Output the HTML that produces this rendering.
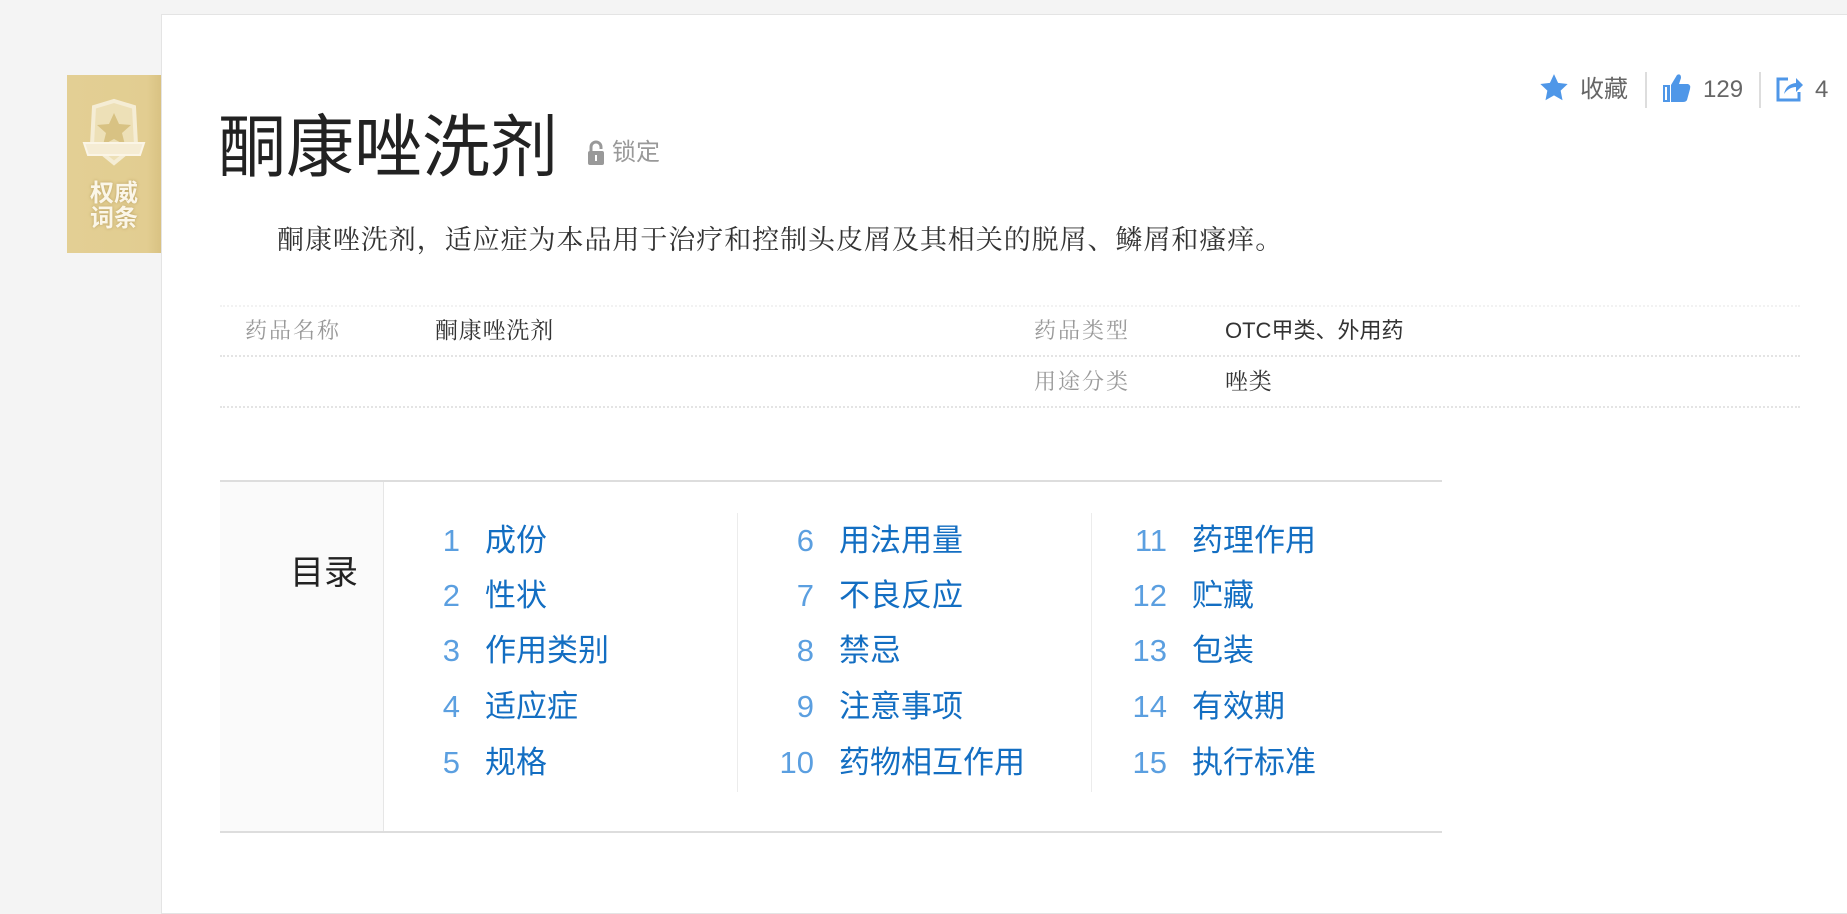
<!DOCTYPE html>
<html><head><meta charset="utf-8"><style>
*{margin:0;padding:0;box-sizing:border-box}
body{width:1847px;height:877px;background:#f4f4f4;position:relative;overflow:hidden;font-family:"Liberation Sans","Noto Sans CJK SC",sans-serif}
.card{position:absolute;left:161px;top:14px;width:1700px;height:900px;background:#fff;border:1px solid #e4e4e4}
.badge{position:absolute;left:67px;top:75px;width:94px;height:178px;background:linear-gradient(90deg,#e3cf94 0%,#e2cd91 85%,#d9c282 100%)}
.badge .t{position:absolute;left:0;width:94px;top:106px;text-align:center;color:#fbf6e8;font-size:24px;line-height:25px;font-weight:bold;text-shadow:0 0 3px #b9a062}
.abs{position:absolute;white-space:nowrap}
.title{left:218px;top:103px;font-size:68px;line-height:90px;color:#222}
.lock{left:612px;top:139px;font-size:24px;color:#999;line-height:28px}
.desc{left:277px;top:222px;font-family:"Liberation Serif","Noto Serif CJK SC",serif;font-size:27px;letter-spacing:.95px;color:#333;line-height:36px}
.dash{position:absolute;left:220px;width:1580px;border-top:2px dotted #e4e4e4}
.lab{font-family:"Liberation Serif","Noto Serif CJK SC",serif;font-size:22px;letter-spacing:2px;color:#999;line-height:30px}
.val{font-family:"Liberation Serif","Noto Serif CJK SC",serif;font-size:23px;letter-spacing:.8px;color:#333;line-height:30px}
.tools{top:75px;font-size:24px;color:#666;line-height:30px}
.toc{position:absolute;left:220px;top:480px;width:1222px;height:353px;border-top:2px solid #ddd;border-bottom:2px solid #ddd}
.tocl{position:absolute;left:0;top:0;width:164px;height:100%;background:#fafafa;border-right:1px solid #e6e6e6}
.tocl span{position:absolute;left:70px;top:71px;font-size:34px;color:#222;line-height:40px}
.vl{position:absolute;top:31px;height:279px;border-left:1px solid #ececec}
.it{position:absolute;font-size:31px;line-height:36px;color:#136ec2;white-space:nowrap}
.it b{font-weight:normal;color:#5b9fe0;position:absolute;text-align:right;width:60px}
</style></head><body>
<div class="card"></div>
<div class="badge">
<svg style="position:absolute;left:13px;top:22px" width="68" height="76" viewBox="0 0 68 72">
<path d="M14 8 L34 2 L54 8 L56 46 L34 64 L12 46 Z" fill="#efe2bc" stroke="#f8f1dd" stroke-width="4" opacity=".9"/>
<path d="M34 14 l5 11 12 1 -9 8 3 12 -11 -6 -11 6 3 -12 -9 -8 12 -1z" fill="#d8c283"/>
<path d="M4 44 L64 44 L60 56 L8 56 Z" fill="#f5ecd4" stroke="#fbf5e6" stroke-width="2"/>
</svg>
<div class="t">权威<br>词条</div>
</div>
<div class="abs title">酮康唑洗剂</div>
<svg class="abs" style="left:588px;top:140px" width="16" height="25" viewBox="0 0 16 25"><path d="M3 11 V7 a5 5 0 0 1 10 0 V9" fill="none" stroke="#999" stroke-width="3"/><rect x="0" y="11" width="16" height="14" rx="2" fill="#999"/><rect x="7" y="15" width="2" height="6" fill="#fff"/></svg>
<div class="abs lock">锁定</div>

<svg class="abs" style="left:1540px;top:74px" width="28" height="27" viewBox="0 0 24 23"><path d="M12 0 l3.5 7.5 8.2 1 -6 5.7 1.6 8.2 -7.3 -4.1 -7.3 4.1 1.6 -8.2 -6 -5.7 8.2 -1z" fill="#4f97e8"/></svg>
<div class="abs tools" style="left:1580px">收藏</div>
<div class="abs" style="left:1645px;top:72px;height:36px;border-left:2px solid #ddd"></div>
<svg class="abs" style="left:1663px;top:73px" width="28" height="30" viewBox="0 0 28 30"><rect x="0" y="12" width="7" height="17" fill="#4f97e8"/><rect x="2" y="14" width="2" height="13" fill="#fff"/><path d="M8 12 L14 2 Q18 0 18 5 L16 11 H25 Q28 12 27 16 L24 27 Q23 29 20 29 H8 Z" fill="#4f97e8"/></svg>
<div class="abs tools" style="left:1703px">129</div>
<div class="abs" style="left:1759px;top:72px;height:36px;border-left:2px solid #ddd"></div>
<svg class="abs" style="left:1776px;top:75px" width="28" height="27" viewBox="0 0 28 27"><path d="M12 4 H2 V25 H23 V17" fill="none" stroke="#4f97e8" stroke-width="3"/><path d="M8 19 Q10 9 20 8 V3 L27 10 L20 17 V12 Q13 12 8 19Z" fill="#4f97e8"/></svg>
<div class="abs tools" style="left:1815px">4</div>

<div class="abs desc">酮康唑洗剂，适应症为本品用于治疗和控制头皮屑及其相关的脱屑、鳞屑和瘙痒。</div>

<div class="dash" style="top:305px;border-top-color:#f2f2f2"></div>
<div class="dash" style="top:355px"></div>
<div class="dash" style="top:406px"></div>
<div class="abs lab" style="left:245px;top:316px">药品名称</div>
<div class="abs val" style="left:435px;top:316px">酮康唑洗剂</div>
<div class="abs lab" style="left:1034px;top:316px">药品类型</div>
<div class="abs val" style="left:1225px;top:316px;font-family:'Liberation Sans','Noto Sans CJK SC',sans-serif;font-size:22px;letter-spacing:0">OTC甲类、外用药</div>
<div class="abs lab" style="left:1034px;top:367px">用途分类</div>
<div class="abs val" style="left:1225px;top:367px">唑类</div>

<div class="toc">
<div class="tocl"><span>目录</span></div>
<div class="vl" style="left:517px"></div>
<div class="vl" style="left:871px"></div>
</div>
<div class="it" style="left:485px;top:523px"><b style="left:-85px">1</b>成份</div>
<div class="it" style="left:485px;top:578px"><b style="left:-85px">2</b>性状</div>
<div class="it" style="left:485px;top:633px"><b style="left:-85px">3</b>作用类别</div>
<div class="it" style="left:485px;top:689px"><b style="left:-85px">4</b>适应症</div>
<div class="it" style="left:485px;top:745px"><b style="left:-85px">5</b>规格</div>
<div class="it" style="left:839px;top:523px"><b style="left:-85px">6</b>用法用量</div>
<div class="it" style="left:839px;top:578px"><b style="left:-85px">7</b>不良反应</div>
<div class="it" style="left:839px;top:633px"><b style="left:-85px">8</b>禁忌</div>
<div class="it" style="left:839px;top:689px"><b style="left:-85px">9</b>注意事项</div>
<div class="it" style="left:839px;top:745px"><b style="left:-85px">10</b>药物相互作用</div>
<div class="it" style="left:1192px;top:523px"><b style="left:-85px">11</b>药理作用</div>
<div class="it" style="left:1192px;top:578px"><b style="left:-85px">12</b>贮藏</div>
<div class="it" style="left:1192px;top:633px"><b style="left:-85px">13</b>包装</div>
<div class="it" style="left:1192px;top:689px"><b style="left:-85px">14</b>有效期</div>
<div class="it" style="left:1192px;top:745px"><b style="left:-85px">15</b>执行标准</div>
</body></html>
